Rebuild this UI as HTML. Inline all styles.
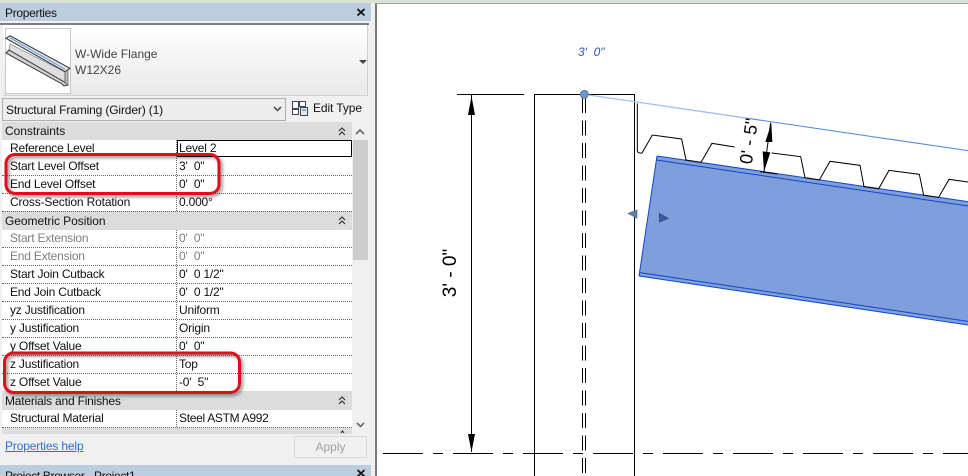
<!DOCTYPE html>
<html><head><meta charset="utf-8">
<style>
html,body{margin:0;padding:0;width:968px;height:476px;overflow:hidden;background:#f0f0f0}
body{position:relative;font-family:"Liberation Sans",sans-serif;font-size:12px;color:#111}
.a{position:absolute}
.t{position:absolute;white-space:nowrap;line-height:18px;font-size:12px;letter-spacing:-.2px}
.h{position:absolute;left:2px;width:350px;background:#dcdcdc}
.ln{position:absolute;left:2px;width:350px;border-top:1px dotted #666;height:0}
.g{color:#7f7f7f}
</style></head><body>
<div class="a" style="left:0;top:0;width:968px;height:3px;background:#d9e4d4"></div>
<div class="a" style="left:0;top:3px;width:371px;height:18px;background:#bccddd"></div>
<div class="t" style="left:5px;top:4px;letter-spacing:-.3px">Properties</div>
<div class="a" style="left:0;top:23px;width:369px;height:2px;background:#7d7d7d"></div>
<div class="a" style="left:3px;top:25px;width:365px;height:71px;background:linear-gradient(#fff,#e9e9e9);border-bottom:1px solid #d0d0d0;border-right:1px solid #d0d0d0;box-sizing:border-box"></div>
<div class="a" style="left:5px;top:28px;width:66px;height:66px;background:#fff;border:1px solid #c8c8c8;box-sizing:border-box"></div>
<div class="t" style="left:75px;top:45px;color:#444;letter-spacing:0">W-Wide Flange</div>
<div class="t" style="left:75px;top:61px;color:#444;letter-spacing:0">W12X26</div>
<div class="a" style="left:2px;top:98px;width:284px;height:23px;background:#ededed;border:1px solid #adadad;box-sizing:border-box"></div>
<div class="t" style="left:6px;top:101px;letter-spacing:-.14px">Structural Framing (Girder) (1)</div>
<div class="t" style="left:313px;top:99px;letter-spacing:-.1px">Edit Type</div>

<div class="h" style="top:122px;height:18px"></div>
<div class="a" style="left:2px;top:140px;width:350px;height:287px;background:#fff"></div>
<div class="h" style="top:211px;height:19px"></div>
<div class="h" style="top:391px;height:19px"></div>
<div class="h" style="top:428px;height:6px"></div>
<div class="a" style="left:353px;top:140px;width:15px;height:120px;background:#cdcdcd"></div>

<div class="ln" style="top:175px"></div><div class="ln" style="top:193px"></div><div class="ln" style="top:211px"></div>
<div class="ln" style="top:247px"></div><div class="ln" style="top:265px"></div><div class="ln" style="top:283px"></div><div class="ln" style="top:301px"></div><div class="ln" style="top:319px"></div><div class="ln" style="top:337px"></div><div class="ln" style="top:355px"></div><div class="ln" style="top:373px"></div><div class="ln" style="top:427px"></div>
<div class="a" style="left:176px;top:140px;height:71px;border-left:1px dotted #666"></div>
<div class="a" style="left:176px;top:230px;height:161px;border-left:1px dotted #666"></div>
<div class="a" style="left:176px;top:410px;height:17px;border-left:1px dotted #666"></div>
<div class="a" style="left:177px;top:140px;width:175px;height:17px;border:1px solid #000;box-sizing:border-box"></div>

<div class="t" style="left:5px;top:122px;letter-spacing:-.05px">Constraints</div>
<div class="t" style="left:10px;top:139px">Reference Level</div><div class="t" style="left:179px;top:139px">Level 2</div>
<div class="t" style="left:10px;top:157px">Start Level Offset</div><div class="t" style="left:179px;top:157px">3'&nbsp; 0"</div>
<div class="t" style="left:10px;top:175px">End Level Offset</div><div class="t" style="left:179px;top:175px">0'&nbsp; 0"</div>
<div class="t" style="left:10px;top:193px;letter-spacing:-.15px">Cross-Section Rotation</div><div class="t" style="left:179px;top:193px">0.000°</div>
<div class="t" style="left:5px;top:212px;letter-spacing:-.05px">Geometric Position</div>
<div class="t g" style="left:10px;top:229px">Start Extension</div><div class="t g" style="left:179px;top:229px">0'&nbsp; 0"</div>
<div class="t g" style="left:10px;top:247px">End Extension</div><div class="t g" style="left:179px;top:247px">0'&nbsp; 0"</div>
<div class="t" style="left:10px;top:265px">Start Join Cutback</div><div class="t" style="left:179px;top:265px">0'&nbsp; 0 1/2"</div>
<div class="t" style="left:10px;top:283px">End Join Cutback</div><div class="t" style="left:179px;top:283px">0'&nbsp; 0 1/2"</div>
<div class="t" style="left:10px;top:301px">yz Justification</div><div class="t" style="left:179px;top:301px">Uniform</div>
<div class="t" style="left:10px;top:319px">y Justification</div><div class="t" style="left:179px;top:319px">Origin</div>
<div class="t" style="left:10px;top:337px">y Offset Value</div><div class="t" style="left:179px;top:337px">0'&nbsp; 0"</div>
<div class="t" style="left:10px;top:355px">z Justification</div><div class="t" style="left:179px;top:355px">Top</div>
<div class="t" style="left:10px;top:373px">z Offset Value</div><div class="t" style="left:179px;top:373px">-0'&nbsp; 5"</div>
<div class="t" style="left:5px;top:392px;letter-spacing:-.2px">Materials and Finishes</div>
<div class="t" style="left:10px;top:409px">Structural Material</div><div class="t" style="left:179px;top:409px;letter-spacing:-.3px">Steel ASTM A992</div>

<div class="a" style="left:0;top:434px;width:370px;height:24px;background:#f0f0f0"></div>
<div class="t" style="left:5px;top:437px;color:#2a6fc9;text-decoration:underline;letter-spacing:-.15px">Properties help</div>
<div class="a" style="left:294px;top:436px;width:73px;height:22px;background:#f0f0f0;border:1px solid #d8d8d8;box-sizing:border-box;color:#a0a0a0;text-align:center;line-height:21px">Apply</div>
<div class="a" style="left:0;top:465px;width:371px;height:11px;background:#bccddd"></div>
<div class="t" style="left:5px;top:467px;letter-spacing:-.35px">Project Browser - Project1</div>

<div class="a" style="left:375px;top:3px;width:593px;height:473px;background:#fff;border-left:2px solid #7a7a7a;border-top:1px solid #a0a0a0;box-sizing:border-box"></div>

<svg class="a" style="left:0;top:0" width="968" height="476" viewBox="0 0 968 476">
<defs><filter id="s" x="-10%" y="-20%" width="120%" height="150%"><feDropShadow dx="2" dy="2" stdDeviation="1.600" flood-color="#000" flood-opacity=".45"/></filter></defs>
<!-- close -->
<path d="M357.500 9l7 6.500m0-6.500l-7 6.500" stroke="#111" stroke-width="1.800" fill="none"/>
<path d="M357.500 470l7 6.500m0-6.500l-7 6.500" stroke="#111" stroke-width="1.800" fill="none"/>
<!-- type dropdown arrow -->
<path d="M359 60h8l-4 4z" fill="#444"/>
<path d="M274 107l3.500 3.500 3.500-3.500" stroke="#555" stroke-width="1.600" fill="none"/>
<!-- edit type icon -->
<g fill="#fff" stroke="#3a4a5a" stroke-width="1"><path d="M292.500 101.500h6v7h-6zM299.500 101.500h6v5h-6zM292.500 109.500h6v5h-6z"/><path d="M300.500 107.500h7v8h-7z" fill="#dfe8f2"/></g><path d="M302 110h4" stroke="#2f6fb5"/>
<!-- section chevrons -->
<g stroke="#222" stroke-width="1" fill="none">
<path d="M339 131l3-3 3 3M339 135l3-3 3 3"/><path d="M339 220l3-3 3 3M339 224l3-3 3 3"/><path d="M339 400l3-3 3 3M339 404l3-3 3 3"/></g>
<path d="M341 433l1.500-2 1.500 2" stroke="#222" fill="none"/>
<path d="M356 134l4-4 4 4" stroke="#666" stroke-width="1.600" fill="none"/>
<path d="M357 423l3.500 3.500 3.500-3.500" stroke="#666" stroke-width="1.600" fill="none"/>
<!-- beam thumbnail -->
<path d="M10 44L65 72 65 83 9 51z" fill="#dedede" stroke="#777" stroke-width=".7"/>
<path d="M6 53L9 50 66 83 68 85 64 86 62 84z" fill="#d0d0d0" stroke="#333" stroke-width="1"/>
<path d="M6 38.300L10 35.700 70 68.300 65 71.700z" fill="#e2e2e2" stroke="#333" stroke-width="1"/>
<path d="M10 37.700L65 69.300" stroke="#5aa3e6" stroke-width="1"/>
<path d="M65 72L68 70 68 85 65 83z" fill="#bdbdbd" stroke="#555" stroke-width=".7"/>
<!-- red callouts -->
<rect x="6" y="154.500" width="213" height="39" rx="9" fill="none" stroke="#e0101a" stroke-width="3" filter="url(#s)"/>
<rect x="4.500" y="353" width="235" height="39.500" rx="9" fill="none" stroke="#e0101a" stroke-width="3" filter="url(#s)"/>
<!-- canvas -->
<g fill="none">
<path d="M383 453.500H968" stroke="#000" stroke-width="1" stroke-dasharray="40 10 10 10"/>
<path d="M457 94.500H524" stroke="#000"/>
<path d="M471.500 94V452" stroke="#000"/>
<path d="M534.500 476V94.500H634.500V476" stroke="#000"/>
<path d="M582.500 98V476M585.500 98V476" stroke="#000" stroke-dasharray="15 7.500"/>
</g>
<path d="M471.500 96L468 115H475z" fill="#000"/>
<path d="M471.500 452L468 434H475z" fill="#000"/>
<text transform="translate(456,273) rotate(-90)" text-anchor="middle" font-family="Liberation Sans" font-size="19" fill="#000">3' - 0"</text>
<g transform="translate(560,30) scale(.33333)">
<path d="M291 378L1224 515V885L237 738z" fill="#7f9edc"/>
<path d="M291 378L1224 515M289 390L1224 528M237 738L1224 885M240 728L1224 874M291 378L237 738" fill="none" stroke="#0f47c4" stroke-width="3"/>
<path d="M232 220V360Q232 371 246 369L277 315L365 327L378 390L423 397L456 340L524 351" fill="none" stroke="#000" stroke-width="3"/>
<path d="M635 369L722 380L735 443L778 450L810 394L900 406L912 470L956 476L987 421L1078 433L1091 496L1136 502L1167 448L1224 456" fill="none" stroke="#000" stroke-width="3"/>
<path d="M73 193L1224 362" stroke="#4f87d8" stroke-width="3" fill="none"/>
<path d="M73 193L560 265" stroke="#a6c9f2" stroke-width="3" fill="none"/>
<path d="M632 278L612 425" stroke="#000" stroke-width="3" fill="none"/>
<path d="M634 280L616 336 637 336z" fill="#000"/>
<path d="M612 425L608 364 631 367z" fill="#000"/>
<path d="M600 425L652 432" stroke="#000" stroke-width="3"/>
<circle cx="73" cy="193" r="12" fill="#5b9be0" stroke="#777" stroke-width="3"/>
<path d="M204 550L231 540V565z" fill="#5b82c0" stroke="#666" stroke-width="2"/>
<path d="M298 550L325 565L298 576z" fill="#2d5dbb" stroke="#444" stroke-width="2"/>
</g>
<text transform="translate(755,142) rotate(-82)" text-anchor="middle" font-family="Liberation Sans" font-size="18" fill="#000">0' - 5"</text>
<text x="578" y="56" font-family="Liberation Sans" font-size="12" font-style="italic" fill="#2458c8" xml:space="preserve">3'  0"</text>
</svg>
</body></html>
